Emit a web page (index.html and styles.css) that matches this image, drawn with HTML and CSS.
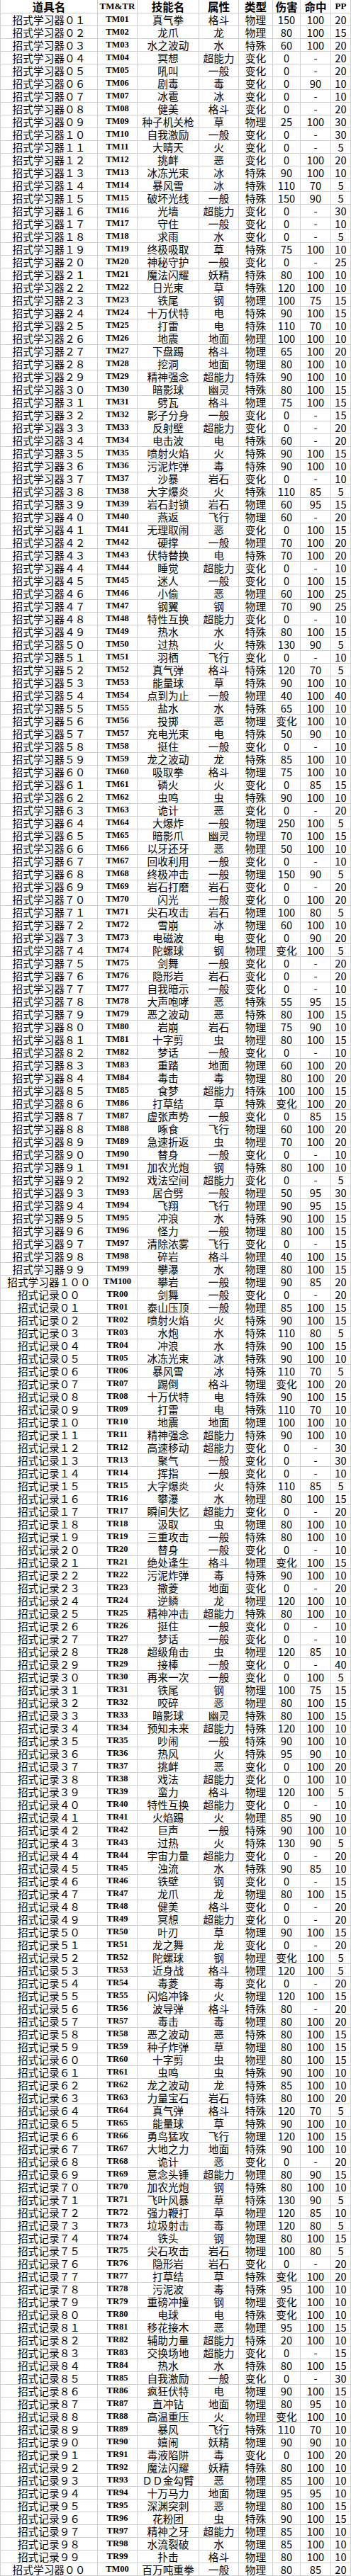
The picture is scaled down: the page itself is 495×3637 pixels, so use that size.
FILE: index.html
```html
<!DOCTYPE html>
<html lang="zh-CN">
<head>
<meta charset="utf-8">
<title>招式学习器</title>
<link rel="stylesheet" href="styles.css">
</head>
<body>
<table class="sheet">
<thead>
<tr><th>道具名<th class="lat">TM&amp;TR<th>技能名<th>属性<th>类型<th>伤害<th>命中<th class="lat">PP
</thead>
<tbody>
<tr><td>招式学习器０１<td>TM01<td>真气拳<td>格斗<td>物理<td>150<td>100<td>20
<tr><td>招式学习器０２<td>TM02<td>龙爪<td>龙<td>物理<td>80<td>100<td>15
<tr><td>招式学习器０３<td>TM03<td>水之波动<td>水<td>特殊<td>60<td>100<td>20
<tr><td>招式学习器０４<td>TM04<td>冥想<td>超能力<td>变化<td>0<td>-<td>20
<tr><td>招式学习器０５<td>TM05<td>吼叫<td>一般<td>变化<td>0<td>-<td>20
<tr><td>招式学习器０６<td>TM06<td>剧毒<td>毒<td>变化<td>0<td>90<td>10
<tr><td>招式学习器０７<td>TM07<td>冰雹<td>冰<td>变化<td>0<td>-<td>10
<tr><td>招式学习器０８<td>TM08<td>健美<td>格斗<td>变化<td>0<td>-<td>20
<tr><td>招式学习器０９<td>TM09<td>种子机关枪<td>草<td>物理<td>25<td>100<td>30
<tr><td>招式学习器１０<td>TM10<td>自我激励<td>一般<td>变化<td>0<td>-<td>30
<tr><td>招式学习器１１<td>TM11<td>大晴天<td>火<td>变化<td>0<td>-<td>5
<tr><td>招式学习器１２<td>TM12<td>挑衅<td>恶<td>变化<td>0<td>100<td>20
<tr><td>招式学习器１３<td>TM13<td>冰冻光束<td>冰<td>特殊<td>90<td>100<td>10
<tr><td>招式学习器１４<td>TM14<td>暴风雪<td>冰<td>特殊<td>110<td>70<td>5
<tr><td>招式学习器１５<td>TM15<td>破坏光线<td>一般<td>特殊<td>150<td>90<td>5
<tr><td>招式学习器１６<td>TM16<td>光墙<td>超能力<td>变化<td>0<td>-<td>30
<tr><td>招式学习器１７<td>TM17<td>守住<td>一般<td>变化<td>0<td>-<td>10
<tr><td>招式学习器１８<td>TM18<td>求雨<td>水<td>变化<td>0<td>-<td>5
<tr><td>招式学习器１９<td>TM19<td>终极吸取<td>草<td>特殊<td>75<td>100<td>10
<tr><td>招式学习器２０<td>TM20<td>神秘守护<td>一般<td>变化<td>0<td>-<td>25
<tr><td>招式学习器２１<td>TM21<td>魔法闪耀<td>妖精<td>特殊<td>80<td>100<td>10
<tr><td>招式学习器２２<td>TM22<td>日光束<td>草<td>特殊<td>120<td>100<td>10
<tr><td>招式学习器２３<td>TM23<td>铁尾<td>钢<td>物理<td>100<td>75<td>15
<tr><td>招式学习器２４<td>TM24<td>十万伏特<td>电<td>特殊<td>90<td>100<td>15
<tr><td>招式学习器２５<td>TM25<td>打雷<td>电<td>特殊<td>110<td>70<td>10
<tr><td>招式学习器２６<td>TM26<td>地震<td>地面<td>物理<td>100<td>100<td>10
<tr><td>招式学习器２７<td>TM27<td>下盘踢<td>格斗<td>物理<td>65<td>100<td>20
<tr><td>招式学习器２８<td>TM28<td>挖洞<td>地面<td>物理<td>80<td>100<td>10
<tr><td>招式学习器２９<td>TM29<td>精神强念<td>超能力<td>特殊<td>90<td>100<td>10
<tr><td>招式学习器３０<td>TM30<td>暗影球<td>幽灵<td>特殊<td>80<td>100<td>15
<tr><td>招式学习器３１<td>TM31<td>劈瓦<td>格斗<td>物理<td>75<td>100<td>15
<tr><td>招式学习器３２<td>TM32<td>影子分身<td>一般<td>变化<td>0<td>-<td>15
<tr><td>招式学习器３３<td>TM33<td>反射壁<td>超能力<td>变化<td>0<td>-<td>20
<tr><td>招式学习器３４<td>TM34<td>电击波<td>电<td>特殊<td>60<td>-<td>20
<tr><td>招式学习器３５<td>TM35<td>喷射火焰<td>火<td>特殊<td>90<td>100<td>15
<tr><td>招式学习器３６<td>TM36<td>污泥炸弹<td>毒<td>特殊<td>90<td>100<td>10
<tr><td>招式学习器３７<td>TM37<td>沙暴<td>岩石<td>变化<td>0<td>-<td>10
<tr><td>招式学习器３８<td>TM38<td>大字爆炎<td>火<td>特殊<td>110<td>85<td>5
<tr><td>招式学习器３９<td>TM39<td>岩石封锁<td>岩石<td>物理<td>60<td>95<td>15
<tr><td>招式学习器４０<td>TM40<td>燕返<td>飞行<td>物理<td>60<td>-<td>20
<tr><td>招式学习器４１<td>TM41<td>无理取闹<td>恶<td>变化<td>0<td>100<td>15
<tr><td>招式学习器４２<td>TM42<td>硬撑<td>一般<td>物理<td>70<td>100<td>20
<tr><td>招式学习器４３<td>TM43<td>伏特替换<td>电<td>特殊<td>70<td>100<td>20
<tr><td>招式学习器４４<td>TM44<td>睡觉<td>超能力<td>变化<td>0<td>-<td>10
<tr><td>招式学习器４５<td>TM45<td>迷人<td>一般<td>变化<td>0<td>100<td>15
<tr><td>招式学习器４６<td>TM46<td>小偷<td>恶<td>物理<td>60<td>100<td>25
<tr><td>招式学习器４７<td>TM47<td>钢翼<td>钢<td>物理<td>70<td>90<td>25
<tr><td>招式学习器４８<td>TM48<td>特性互换<td>超能力<td>变化<td>0<td>-<td>10
<tr><td>招式学习器４９<td>TM49<td>热水<td>水<td>特殊<td>80<td>100<td>15
<tr><td>招式学习器５０<td>TM50<td>过热<td>火<td>特殊<td>130<td>90<td>5
<tr><td>招式学习器５１<td>TM51<td>羽栖<td>飞行<td>变化<td>0<td>-<td>10
<tr><td>招式学习器５２<td>TM52<td>真气弹<td>格斗<td>特殊<td>120<td>70<td>5
<tr><td>招式学习器５３<td>TM53<td>能量球<td>草<td>特殊<td>90<td>100<td>10
<tr><td>招式学习器５４<td>TM54<td>点到为止<td>一般<td>物理<td>40<td>100<td>40
<tr><td>招式学习器５５<td>TM55<td>盐水<td>水<td>特殊<td>65<td>100<td>10
<tr><td>招式学习器５６<td>TM56<td>投掷<td>恶<td>物理<td>变化<td>100<td>10
<tr><td>招式学习器５７<td>TM57<td>充电光束<td>电<td>特殊<td>50<td>90<td>10
<tr><td>招式学习器５８<td>TM58<td>挺住<td>一般<td>变化<td>0<td>-<td>10
<tr><td>招式学习器５９<td>TM59<td>龙之波动<td>龙<td>特殊<td>85<td>100<td>10
<tr><td>招式学习器６０<td>TM60<td>吸取拳<td>格斗<td>物理<td>75<td>100<td>10
<tr><td>招式学习器６１<td>TM61<td>磷火<td>火<td>变化<td>0<td>85<td>15
<tr><td>招式学习器６２<td>TM62<td>虫鸣<td>虫<td>特殊<td>90<td>100<td>10
<tr><td>招式学习器６３<td>TM63<td>诡计<td>恶<td>变化<td>0<td>-<td>20
<tr><td>招式学习器６４<td>TM64<td>大爆炸<td>一般<td>物理<td>250<td>100<td>5
<tr><td>招式学习器６５<td>TM65<td>暗影爪<td>幽灵<td>物理<td>70<td>100<td>15
<tr><td>招式学习器６６<td>TM66<td>以牙还牙<td>恶<td>物理<td>50<td>100<td>10
<tr><td>招式学习器６７<td>TM67<td>回收利用<td>一般<td>变化<td>0<td>-<td>10
<tr><td>招式学习器６８<td>TM68<td>终极冲击<td>一般<td>物理<td>150<td>90<td>5
<tr><td>招式学习器６９<td>TM69<td>岩石打磨<td>岩石<td>变化<td>0<td>-<td>20
<tr><td>招式学习器７０<td>TM70<td>闪光<td>一般<td>变化<td>0<td>100<td>20
<tr><td>招式学习器７１<td>TM71<td>尖石攻击<td>岩石<td>物理<td>100<td>80<td>5
<tr><td>招式学习器７２<td>TM72<td>雪崩<td>冰<td>物理<td>60<td>100<td>10
<tr><td>招式学习器７３<td>TM73<td>电磁波<td>电<td>变化<td>0<td>90<td>20
<tr><td>招式学习器７４<td>TM74<td>陀螺球<td>钢<td>物理<td>变化<td>100<td>5
<tr><td>招式学习器７５<td>TM75<td>剑舞<td>一般<td>变化<td>0<td>-<td>20
<tr><td>招式学习器７６<td>TM76<td>隐形岩<td>岩石<td>变化<td>0<td>-<td>20
<tr><td>招式学习器７７<td>TM77<td>自我暗示<td>一般<td>变化<td>0<td>-<td>10
<tr><td>招式学习器７８<td>TM78<td>大声咆哮<td>恶<td>特殊<td>55<td>95<td>15
<tr><td>招式学习器７９<td>TM79<td>恶之波动<td>恶<td>特殊<td>80<td>100<td>15
<tr><td>招式学习器８０<td>TM80<td>岩崩<td>岩石<td>物理<td>75<td>90<td>10
<tr><td>招式学习器８１<td>TM81<td>十字剪<td>虫<td>物理<td>80<td>100<td>15
<tr><td>招式学习器８２<td>TM82<td>梦话<td>一般<td>变化<td>0<td>-<td>10
<tr><td>招式学习器８３<td>TM83<td>重踏<td>地面<td>物理<td>60<td>100<td>20
<tr><td>招式学习器８４<td>TM84<td>毒击<td>毒<td>物理<td>80<td>100<td>20
<tr><td>招式学习器８５<td>TM85<td>食梦<td>超能力<td>特殊<td>100<td>100<td>15
<tr><td>招式学习器８６<td>TM86<td>打草结<td>草<td>特殊<td>变化<td>100<td>20
<tr><td>招式学习器８７<td>TM87<td>虚张声势<td>一般<td>变化<td>0<td>85<td>15
<tr><td>招式学习器８８<td>TM88<td>啄食<td>飞行<td>物理<td>60<td>100<td>20
<tr><td>招式学习器８９<td>TM89<td>急速折返<td>虫<td>物理<td>70<td>100<td>20
<tr><td>招式学习器９０<td>TM90<td>替身<td>一般<td>变化<td>0<td>-<td>10
<tr><td>招式学习器９１<td>TM91<td>加农光炮<td>钢<td>特殊<td>80<td>100<td>10
<tr><td>招式学习器９２<td>TM92<td>戏法空间<td>超能力<td>变化<td>0<td>-<td>5
<tr><td>招式学习器９３<td>TM93<td>居合劈<td>一般<td>物理<td>50<td>95<td>30
<tr><td>招式学习器９４<td>TM94<td>飞翔<td>飞行<td>物理<td>90<td>95<td>15
<tr><td>招式学习器９５<td>TM95<td>冲浪<td>水<td>特殊<td>90<td>100<td>15
<tr><td>招式学习器９６<td>TM96<td>怪力<td>一般<td>物理<td>80<td>100<td>15
<tr><td>招式学习器９７<td>TM97<td>清除浓雾<td>飞行<td>变化<td>0<td>-<td>15
<tr><td>招式学习器９８<td>TM98<td>碎岩<td>格斗<td>物理<td>40<td>100<td>15
<tr><td>招式学习器９９<td>TM99<td>攀瀑<td>水<td>物理<td>80<td>100<td>15
<tr><td>招式学习器１００<td>TM100<td>攀岩<td>一般<td>物理<td>90<td>85<td>20
<tr><td>招式记录００<td>TR00<td>剑舞<td>一般<td>变化<td>0<td>-<td>20
<tr><td>招式记录０１<td>TR01<td>泰山压顶<td>一般<td>物理<td>85<td>100<td>15
<tr><td>招式记录０２<td>TR02<td>喷射火焰<td>火<td>特殊<td>90<td>100<td>15
<tr><td>招式记录０３<td>TR03<td>水炮<td>水<td>特殊<td>110<td>80<td>5
<tr><td>招式记录０４<td>TR04<td>冲浪<td>水<td>特殊<td>90<td>100<td>15
<tr><td>招式记录０５<td>TR05<td>冰冻光束<td>冰<td>特殊<td>90<td>100<td>10
<tr><td>招式记录０６<td>TR06<td>暴风雪<td>冰<td>特殊<td>110<td>70<td>5
<tr><td>招式记录０７<td>TR07<td>踢倒<td>格斗<td>物理<td>变化<td>100<td>20
<tr><td>招式记录０８<td>TR08<td>十万伏特<td>电<td>特殊<td>90<td>100<td>15
<tr><td>招式记录０９<td>TR09<td>打雷<td>电<td>特殊<td>110<td>70<td>10
<tr><td>招式记录１０<td>TR10<td>地震<td>地面<td>物理<td>100<td>100<td>10
<tr><td>招式记录１１<td>TR11<td>精神强念<td>超能力<td>特殊<td>90<td>100<td>10
<tr><td>招式记录１２<td>TR12<td>高速移动<td>超能力<td>变化<td>0<td>-<td>30
<tr><td>招式记录１３<td>TR13<td>聚气<td>一般<td>变化<td>0<td>-<td>30
<tr><td>招式记录１４<td>TR14<td>挥指<td>一般<td>变化<td>0<td>-<td>10
<tr><td>招式记录１５<td>TR15<td>大字爆炎<td>火<td>特殊<td>110<td>85<td>5
<tr><td>招式记录１６<td>TR16<td>攀瀑<td>水<td>物理<td>80<td>100<td>15
<tr><td>招式记录１７<td>TR17<td>瞬间失忆<td>超能力<td>变化<td>0<td>-<td>20
<tr><td>招式记录１８<td>TR18<td>汲取<td>虫<td>物理<td>80<td>100<td>10
<tr><td>招式记录１９<td>TR19<td>三重攻击<td>一般<td>特殊<td>80<td>100<td>10
<tr><td>招式记录２０<td>TR20<td>替身<td>一般<td>变化<td>0<td>-<td>10
<tr><td>招式记录２１<td>TR21<td>绝处逢生<td>格斗<td>物理<td>变化<td>100<td>15
<tr><td>招式记录２２<td>TR22<td>污泥炸弹<td>毒<td>特殊<td>90<td>100<td>10
<tr><td>招式记录２３<td>TR23<td>撒菱<td>地面<td>变化<td>0<td>-<td>20
<tr><td>招式记录２４<td>TR24<td>逆鳞<td>龙<td>物理<td>120<td>100<td>10
<tr><td>招式记录２５<td>TR25<td>精神冲击<td>超能力<td>特殊<td>80<td>100<td>10
<tr><td>招式记录２６<td>TR26<td>挺住<td>一般<td>变化<td>0<td>-<td>10
<tr><td>招式记录２７<td>TR27<td>梦话<td>一般<td>变化<td>0<td>-<td>10
<tr><td>招式记录２８<td>TR28<td>超级角击<td>虫<td>物理<td>120<td>85<td>10
<tr><td>招式记录２９<td>TR29<td>接棒<td>一般<td>变化<td>0<td>-<td>40
<tr><td>招式记录３０<td>TR30<td>再来一次<td>一般<td>变化<td>0<td>100<td>5
<tr><td>招式记录３１<td>TR31<td>铁尾<td>钢<td>物理<td>100<td>75<td>15
<tr><td>招式记录３２<td>TR32<td>咬碎<td>恶<td>物理<td>80<td>100<td>15
<tr><td>招式记录３３<td>TR33<td>暗影球<td>幽灵<td>特殊<td>80<td>100<td>15
<tr><td>招式记录３４<td>TR34<td>预知未来<td>超能力<td>特殊<td>120<td>100<td>10
<tr><td>招式记录３５<td>TR35<td>吵闹<td>一般<td>特殊<td>90<td>100<td>10
<tr><td>招式记录３６<td>TR36<td>热风<td>火<td>特殊<td>95<td>90<td>10
<tr><td>招式记录３７<td>TR37<td>挑衅<td>恶<td>变化<td>0<td>100<td>20
<tr><td>招式记录３８<td>TR38<td>戏法<td>超能力<td>变化<td>0<td>100<td>10
<tr><td>招式记录３９<td>TR39<td>蛮力<td>格斗<td>物理<td>120<td>100<td>5
<tr><td>招式记录４０<td>TR40<td>特性互换<td>超能力<td>变化<td>0<td>-<td>10
<tr><td>招式记录４１<td>TR41<td>火焰踢<td>火<td>物理<td>85<td>90<td>10
<tr><td>招式记录４２<td>TR42<td>巨声<td>一般<td>特殊<td>90<td>100<td>10
<tr><td>招式记录４３<td>TR43<td>过热<td>火<td>特殊<td>130<td>90<td>5
<tr><td>招式记录４４<td>TR44<td>宇宙力量<td>超能力<td>变化<td>0<td>-<td>20
<tr><td>招式记录４５<td>TR45<td>浊流<td>水<td>特殊<td>90<td>85<td>10
<tr><td>招式记录４６<td>TR46<td>铁壁<td>钢<td>变化<td>0<td>-<td>15
<tr><td>招式记录４７<td>TR47<td>龙爪<td>龙<td>物理<td>80<td>100<td>15
<tr><td>招式记录４８<td>TR48<td>健美<td>格斗<td>变化<td>0<td>-<td>20
<tr><td>招式记录４９<td>TR49<td>冥想<td>超能力<td>变化<td>0<td>-<td>20
<tr><td>招式记录５０<td>TR50<td>叶刃<td>草<td>物理<td>90<td>100<td>15
<tr><td>招式记录５１<td>TR51<td>龙之舞<td>龙<td>变化<td>0<td>-<td>20
<tr><td>招式记录５２<td>TR52<td>陀螺球<td>钢<td>物理<td>变化<td>100<td>5
<tr><td>招式记录５３<td>TR53<td>近身战<td>格斗<td>物理<td>120<td>100<td>5
<tr><td>招式记录５４<td>TR54<td>毒菱<td>毒<td>变化<td>0<td>-<td>20
<tr><td>招式记录５５<td>TR55<td>闪焰冲锋<td>火<td>物理<td>120<td>100<td>15
<tr><td>招式记录５６<td>TR56<td>波导弹<td>格斗<td>特殊<td>80<td>-<td>20
<tr><td>招式记录５７<td>TR57<td>毒击<td>毒<td>物理<td>80<td>100<td>20
<tr><td>招式记录５８<td>TR58<td>恶之波动<td>恶<td>特殊<td>80<td>100<td>15
<tr><td>招式记录５９<td>TR59<td>种子炸弹<td>草<td>物理<td>80<td>100<td>15
<tr><td>招式记录６０<td>TR60<td>十字剪<td>虫<td>物理<td>80<td>100<td>15
<tr><td>招式记录６１<td>TR61<td>虫鸣<td>虫<td>特殊<td>90<td>100<td>10
<tr><td>招式记录６２<td>TR62<td>龙之波动<td>龙<td>特殊<td>85<td>100<td>10
<tr><td>招式记录６３<td>TR63<td>力量宝石<td>岩石<td>特殊<td>80<td>100<td>20
<tr><td>招式记录６４<td>TR64<td>真气弹<td>格斗<td>特殊<td>120<td>70<td>5
<tr><td>招式记录６５<td>TR65<td>能量球<td>草<td>特殊<td>90<td>100<td>10
<tr><td>招式记录６６<td>TR66<td>勇鸟猛攻<td>飞行<td>物理<td>120<td>100<td>15
<tr><td>招式记录６７<td>TR67<td>大地之力<td>地面<td>特殊<td>90<td>100<td>10
<tr><td>招式记录６８<td>TR68<td>诡计<td>恶<td>变化<td>0<td>-<td>20
<tr><td>招式记录６９<td>TR69<td>意念头锤<td>超能力<td>物理<td>80<td>90<td>15
<tr><td>招式记录７０<td>TR70<td>加农光炮<td>钢<td>特殊<td>80<td>100<td>10
<tr><td>招式记录７１<td>TR71<td>飞叶风暴<td>草<td>特殊<td>130<td>90<td>5
<tr><td>招式记录７２<td>TR72<td>强力鞭打<td>草<td>物理<td>120<td>85<td>10
<tr><td>招式记录７３<td>TR73<td>垃圾射击<td>毒<td>物理<td>120<td>80<td>5
<tr><td>招式记录７４<td>TR74<td>铁头<td>钢<td>物理<td>80<td>100<td>15
<tr><td>招式记录７５<td>TR75<td>尖石攻击<td>岩石<td>物理<td>100<td>80<td>5
<tr><td>招式记录７６<td>TR76<td>隐形岩<td>岩石<td>变化<td>0<td>-<td>20
<tr><td>招式记录７７<td>TR77<td>打草结<td>草<td>特殊<td>变化<td>100<td>20
<tr><td>招式记录７８<td>TR78<td>污泥波<td>毒<td>特殊<td>95<td>100<td>10
<tr><td>招式记录７９<td>TR79<td>重磅冲撞<td>钢<td>物理<td>变化<td>100<td>10
<tr><td>招式记录８０<td>TR80<td>电球<td>电<td>特殊<td>变化<td>100<td>10
<tr><td>招式记录８１<td>TR81<td>移花接木<td>恶<td>物理<td>95<td>100<td>15
<tr><td>招式记录８２<td>TR82<td>辅助力量<td>超能力<td>特殊<td>20<td>100<td>10
<tr><td>招式记录８３<td>TR83<td>交换场地<td>超能力<td>变化<td>0<td>-<td>15
<tr><td>招式记录８４<td>TR84<td>热水<td>水<td>特殊<td>80<td>100<td>15
<tr><td>招式记录８５<td>TR85<td>自我激励<td>一般<td>变化<td>0<td>-<td>30
<tr><td>招式记录８６<td>TR86<td>疯狂伏特<td>电<td>物理<td>90<td>100<td>15
<tr><td>招式记录８７<td>TR87<td>直冲钻<td>地面<td>物理<td>80<td>95<td>10
<tr><td>招式记录８８<td>TR88<td>高温重压<td>火<td>物理<td>变化<td>100<td>10
<tr><td>招式记录８９<td>TR89<td>暴风<td>飞行<td>特殊<td>110<td>70<td>10
<tr><td>招式记录９０<td>TR90<td>嬉闹<td>妖精<td>物理<td>90<td>90<td>10
<tr><td>招式记录９１<td>TR91<td>毒液陷阱<td>毒<td>变化<td>0<td>100<td>20
<tr><td>招式记录９２<td>TR92<td>魔法闪耀<td>妖精<td>特殊<td>80<td>100<td>10
<tr><td>招式记录９３<td>TR93<td>ＤＤ金勾臂<td>恶<td>物理<td>85<td>100<td>10
<tr><td>招式记录９４<td>TR94<td>十万马力<td>地面<td>物理<td>95<td>95<td>10
<tr><td>招式记录９５<td>TR95<td>深渊突刺<td>恶<td>物理<td>80<td>100<td>15
<tr><td>招式记录９６<td>TR96<td>花粉团<td>虫<td>特殊<td>90<td>100<td>15
<tr><td>招式记录９７<td>TR97<td>精神之牙<td>超能力<td>物理<td>85<td>100<td>10
<tr><td>招式记录９８<td>TR98<td>水流裂破<td>水<td>物理<td>85<td>100<td>10
<tr><td>招式记录９９<td>TR99<td>扑击<td>格斗<td>物理<td>80<td>100<td>10
<tr><td>招式学习器００<td>TM00<td>百万吨重拳<td>一般<td>物理<td>80<td>85<td>20
</tbody>
</table>
</body>
</html>
```

FILE: styles.css
```css
html, body {
  margin: 0;
  padding: 0;
  background: #ffffff;
}

.sheet {
  display: grid;
  grid-template-columns: 137px 56px 87px 56px 48px 39px 43px 28px;
  width: 495px;
  box-sizing: border-box;
  border-left: 1px solid #d0d0d0;
  border-collapse: separate;
  border-spacing: 0;
  font-family: "Noto Sans CJK SC", "Noto Sans", sans-serif;
  font-size: 14.7px;
  color: #000000;
}

.sheet thead,
.sheet tbody,
.sheet tr {
  display: contents;
}

.sheet td,
.sheet th {
  box-sizing: border-box;
  height: 18px;
  padding: 0;
  border-right: 1px solid #d0d0d0;
  border-bottom: 1px solid #d0d0d0;
  text-align: center;
  line-height: 17px;
  white-space: nowrap;
}

.sheet th {
  height: 19px;
  line-height: 18px;
  font-size: 15.5px;
  font-weight: bold;
}

.sheet th.lat {
  font-family: "Liberation Serif", serif;
  font-size: 13px;
}

.sheet td:nth-child(2) {
  font-family: "Liberation Serif", serif;
  font-size: 12.5px;
  font-weight: bold;
}
```
